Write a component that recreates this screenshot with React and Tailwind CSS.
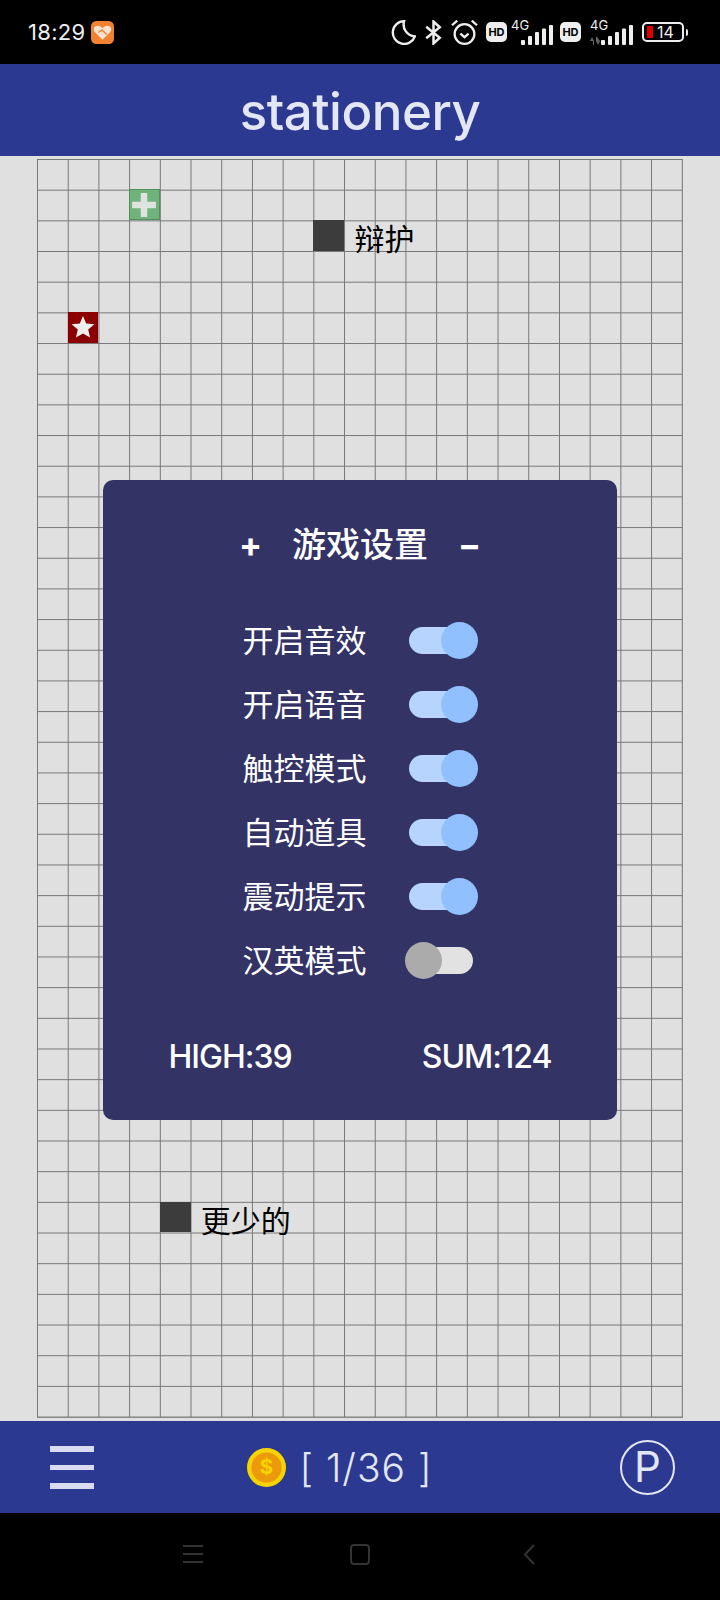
import React from "react";

const font = "font-['Inter','Noto_Sans_CJK_SC',sans-serif]";

const settings = [
  { label: "开启音效", on: true },
  { label: "开启语音", on: true },
  { label: "触控模式", on: true },
  { label: "自动道具", on: true },
  { label: "震动提示", on: true },
  { label: "汉英模式", on: false },
];

const Toggle = ({ on }) => (
  <div className={`relative w-[64px] h-[27px] rounded-full ${on ? "bg-[#b6d4fe]" : "bg-[#e2e2e2]"}`}>
    <div
      className={`absolute top-[-5px] w-[37px] h-[37px] rounded-full ${
        on ? "right-[-5px] bg-[#90c0fd]" : "left-[-4px] bg-[#ababab]"
      }`}
    />
  </div>
);

const Bars = ({ className }) => (
  <svg viewBox="0 0 32 20" className={className} fill="#eee">
    <rect x="0" y="15" width="4" height="5" rx="1" />
    <rect x="7" y="11" width="4" height="9" rx="1" />
    <rect x="14" y="7" width="4" height="13" rx="1" />
    <rect x="21" y="3.5" width="4" height="16.5" rx="1" />
    <rect x="28" y="0" width="4" height="20" rx="1" />
  </svg>
);

const Hd = () => (
  <div className="w-[21px] h-[20px] rounded-[5px] bg-[#eee] text-black text-[11px] font-bold leading-[20px] text-center font-['Inter',sans-serif]">
    HD
  </div>
);

const Signal = ({ arrows }) => (
  <div className="relative w-[43px] h-[26px]">
    <div className={`absolute top-0 text-[13px] leading-[12px] text-[#eee] font-['Inter',sans-serif] ${arrows ? "left-[0px]" : "left-[1px]"}`}>
      4G
    </div>
    {arrows && (
      <svg viewBox="0 0 10 8" className="absolute left-[0px] bottom-[0px] w-[10px] h-[8px]" fill="#666">
        <path d="M0 4 L2 0 L4 4 V8 H3 V4 Z M6 4 V0 H7 L10 4 L8 8 L6 4 Z" />
      </svg>
    )}
    <Bars className="absolute right-0 bottom-0 w-[32px] h-[20px]" />
  </div>
);

const StatusBar = () => (
  <div className="h-[64px] bg-black flex items-center justify-between pl-[28px] pr-[36px] shrink-0 font-['Inter',sans-serif]">
    <div className="flex items-center gap-[6px]">
      <span className="text-[22px] text-[#eee] tracking-[0.3px]">18:29</span>
      <svg viewBox="0 0 22 22" className="w-[23px] h-[23px]">
        <rect width="22" height="22" rx="5" fill="#f08232" />
        <path d="M11 18 L3.6 10.6 C1.5 8 3 4.5 6.3 4.5 C8.3 4.5 9.8 5.3 11 7 C12.2 5.3 13.7 4.5 15.7 4.5 C19 4.5 20.5 8 18.4 10.6 Z" fill="#fbe3d0" />
        <path d="M7 11 L10.5 8.5 L15 13" stroke="#f08232" strokeWidth="1.4" fill="none" />
      </svg>
    </div>
    <div className="flex items-center">
      <svg viewBox="0 0 24 24" className="w-[26px] h-[26px] mr-[9px]" fill="none" stroke="#eee" strokeWidth="2.2">
        <path d="M13 2 A10.5 10.5 0 1 0 23 16 A11 11 0 0 1 13 2 Z" />
      </svg>
      <svg viewBox="0 0 16 24" className="w-[17px] h-[25px] mr-[9px]" fill="none" stroke="#eee" strokeWidth="2.4">
        <path d="M1 6.5 L14 17 L8 22.5 V1.5 L14 7 L1 17.5" />
      </svg>
      <svg viewBox="0 0 26 26" className="w-[27px] h-[27px] mr-[8px]" fill="none" stroke="#eee" strokeWidth="2.2">
        <circle cx="13" cy="14.5" r="9.5" />
        <path d="M1 6 L6 1.5 M25 6 L20 1.5" />
        <path d="M9 14 L13 17.5 L17 14" />
      </svg>
      <Hd />
      <div className="ml-[3px]">
        <Signal />
      </div>
      <div className="ml-[7px]">
        <Hd />
      </div>
      <div className="ml-[9px]">
        <Signal arrows />
      </div>
      <div className="ml-[9px] relative w-[42px] h-[20px] rounded-[5px] border-2 border-[#eee] flex items-center">
        <div className="w-[6px] h-[12px] ml-[3px] rounded-[1px] bg-[#e00000]" />
        <span className="ml-[4px] text-[16px] leading-none text-[#eee]">14</span>
        <div className="absolute right-[-6px] w-[2px] h-[7px] rounded-r bg-[#eee]" />
      </div>
    </div>
  </div>
);

const Tile = ({ className, children }) => (
  <div className={`w-full h-full flex items-center justify-center ${className}`}>{children}</div>
);

const Board = () => (
  <div className="flex-1 flex justify-center pt-[2.5px] bg-[#e0e0e0]">
    <div
      className="w-[646px] h-[1259px] grid grid-cols-[repeat(21,1fr)] grid-rows-[repeat(41,1fr)] border-r border-b border-[#888] bg-[linear-gradient(to_right,#777_1px,transparent_1px),linear-gradient(to_bottom,#777_1px,transparent_1px)] bg-[size:30.71px_30.68px]"
    >
      <div className="col-start-4 row-start-2">
        <Tile className="bg-[#6fb37a] border border-[#4e9159]">
          <svg viewBox="0 0 24 24" className="w-[26px] h-[26px]" fill="#dfe3df">
            <path d="M9 1 H15 V9 H23 V15 H15 V23 H9 V15 H1 V9 H9 Z" />
          </svg>
        </Tile>
      </div>
      <div className="col-start-2 row-start-6">
        <Tile className="bg-[#8b0000]">
          <svg viewBox="0 0 24 24" className="w-[24px] h-[24px]" fill="#eeeeee">
            <path d="M12 1 L15.2 8.6 L23.4 9.3 L17.2 14.6 L19.1 22.6 L12 18.4 L4.9 22.6 L6.8 14.6 L0.6 9.3 L8.8 8.6 Z" />
          </svg>
        </Tile>
      </div>
      <div className="col-start-10 row-start-3 relative">
        <Tile className="bg-[#3c3c3c]" />
        <span className="absolute left-[41px] top-[1px] whitespace-nowrap text-[30px] leading-[36px] text-black">辩护</span>
      </div>
      <div className="col-start-5 row-start-35 relative">
        <Tile className="bg-[#3c3c3c]" />
        <span className="absolute left-[41px] top-[1px] whitespace-nowrap text-[30px] leading-[36px] text-black">更少的</span>
      </div>
    </div>
  </div>
);

const SettingsPanel = () => (
  <div className="absolute inset-0 flex items-center justify-center">
    <div className="w-[514px] h-[640px] rounded-[10px] bg-[#343365] text-white flex flex-col items-center">
      <div className="mt-[42px] h-[46px] w-[242px] flex items-center justify-between text-[34px] font-medium leading-none">
        <span className="font-bold">+</span>
        <span>游戏设置</span>
        <span className="font-bold">−</span>
      </div>
      <div className="mt-[54px] mr-[5px] flex flex-col gap-[27px]">
        {settings.map((item) => (
          <div key={item.label} className="h-[37px] flex items-center">
            <span className="w-[124px] text-[31px] leading-[37px] whitespace-nowrap">{item.label}</span>
            <div className="ml-[42px]">
              <Toggle on={item.on} />
            </div>
          </div>
        ))}
      </div>
      <div className="mt-[58px] w-[383px] flex justify-between text-[32px] leading-[40px] font-medium tracking-[-1px]">
        <span>HIGH:39</span>
        <span>SUM:124</span>
      </div>
    </div>
  </div>
);

const BottomBar = () => (
  <div className="h-[92px] bg-[#2b3990] shrink-0 flex items-center justify-between pl-[50px] pr-[45px] text-[#e3e6f3]">
    <div className="w-[44px] flex flex-col gap-[13px] pt-[1px]">
      <div className="h-[5.5px] bg-[#d9dcf0]" />
      <div className="h-[5.5px] bg-[#d9dcf0]" />
      <div className="h-[5.5px] bg-[#d9dcf0]" />
    </div>
    <div className="flex items-center gap-[13px] ml-[-34px]">
      <svg viewBox="0 0 40 40" className="w-[39px] h-[39px]">
        <circle cx="20" cy="20" r="20" fill="#f5d400" />
        <circle cx="20" cy="20" r="15.5" fill="#ec9a0c" />
        <text x="20" y="27" textAnchor="middle" fontSize="21" fontWeight="700" fill="#f5d400" fontFamily="Inter">$</text>
      </svg>
      <span className="text-[39px] leading-none whitespace-pre font-light tracking-[1px]">[ 1/36 ]</span>
    </div>
    <div className="w-[55px] h-[55px] rounded-full border-2 border-[#e3e6f3] flex items-center justify-center text-[42px] leading-none">
      P
    </div>
  </div>
);

const NavBar = () => (
  <div className="flex-1 bg-black relative flex items-center justify-center">
    <svg viewBox="0 0 20 18" className="absolute left-[183px] top-[32px] w-[20px] h-[18px]" fill="#333">
      <rect y="0" width="20" height="2" />
      <rect y="8" width="20" height="2" />
      <rect y="16" width="20" height="2" />
    </svg>
    <div className="absolute left-[350px] top-[31px] w-[20px] h-[21px] rounded-[4px] border-2 border-[#333]" />
    <svg viewBox="0 0 12 21" className="absolute left-[523px] top-[31px] w-[12px] h-[21px]" fill="none" stroke="#333" strokeWidth="2">
      <path d="M11 1 L2 10.5 L11 20" />
    </svg>
  </div>
);

const App = () => {
  return (
    <div className={`relative w-[720px] h-[1600px] flex flex-col overflow-hidden ${font}`}>
      <StatusBar />
      <div className="h-[92px] pt-[2px] shrink-0 bg-[#2b3990] flex items-center justify-center text-[51px] font-medium tracking-[-0.5px] text-[#e3e6f3] leading-none">
        stationery
      </div>
      <div className="h-[1265px] shrink-0 flex flex-col">
        <Board />
      </div>
      <BottomBar />
      <NavBar />
      <SettingsPanel />
    </div>
  );
};

export default App;
